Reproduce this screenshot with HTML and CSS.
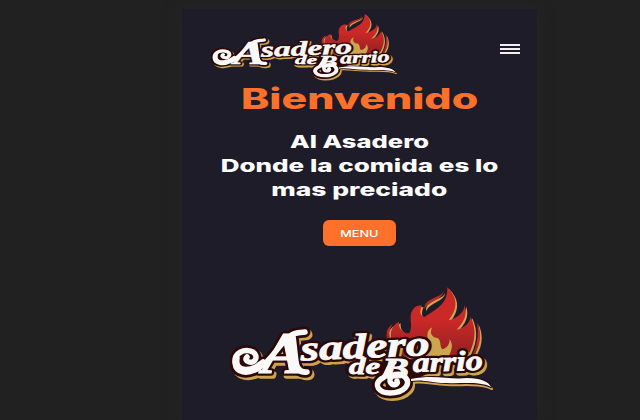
FILE: index.html
```html
<!DOCTYPE html>
<html lang="es">
<head>
<meta charset="utf-8">
<title>Asadero de Barrio</title>
<link rel="stylesheet" href="styles.css">
</head>
<body>
<svg class="defs" width="0" height="0" aria-hidden="true">
  <defs>
    <linearGradient id="fire" x1="0" y1="0" x2="0" y2="1">
      <stop offset=".45" stop-color="#cb2828"/>
      <stop offset="1" stop-color="#8c2020"/>
    </linearGradient>
    <g id="lettering">
      <g class="swash">
        <path d="M62 49C50 55 44 73 29 82C17 89 6 87 5 77C4 67 14 62 23 66C29 70 25 78 19 76C16 75 15 73 17 71"/>
        <path d="M7 72C5 83 14 86 26 81L33 76"/>
        <path d="M63 50L66 76C67 83 70 87 77 86M62 49C66 46 70 47 75 46"/>
        <path d="M164 76C156 82 158 91 151 93C143 99 149 107 160 107C174 107 182 98 175 91C170 86 159 88 160 95C161 101 169 99 167 95"/>
      </g>
      <text class="script" x="32" y="87" font-size="59" textLength="43" lengthAdjust="spacingAndGlyphs">A</text>
      <text class="script" x="71" y="74.500" font-size="35" textLength="129" lengthAdjust="spacingAndGlyphs" transform="rotate(-2.4 71 74.500)">sadero</text>
      <text class="script" x="119" y="87.500" font-size="23" textLength="31" lengthAdjust="spacingAndGlyphs">de</text>
      <text class="script" x="152" y="92" font-size="30" textLength="27" lengthAdjust="spacingAndGlyphs">B</text>
      <text class="script" x="183" y="86" font-size="28" textLength="70" lengthAdjust="spacingAndGlyphs" transform="rotate(-2 183 86)">arrio</text>
    </g>
    <path id="tail" d="M181 93C205 88 219 94 237 92C251 92 259 96 261 101C249 95 231 98 216 97C202 97 193 93 181 95Z"/>
    <g id="flames">
      <path d="M292 22C325 55 323 86 296 121C322 115 346 94 343 74C355 105 338 130 320 149C345 145 360 125 362 110C382 152 375 190 350 236L170 240L124 180C118 150 130 135 147 125C144 148 163 161 178 160C193 133 170 110 192 85C200 75 212 78 216 76C207 95 211 110 224 111C252 90 294 77 292 22Z"/>
      <path d="M281 34C276 61 234 62 224 89C221 73 229 65 247 57C262 50 274 47 281 34Z"/>
      <path d="M380 127C397 160 394 205 361 238C380 201 389 165 380 127Z"/>
      <path d="M128 132C112 143 107 158 111 177L121 179C116 161 118 147 128 132Z"/>
    </g>
    <symbol id="logo" viewBox="0 0 266 116" preserveAspectRatio="none">
      <g transform="translate(120 -6) scale(.3333)">
        <use href="#flames" x="5" y="5" fill="#cda34d"/>
        <use href="#flames" fill="url(#fire)"/>
        <path fill="#cfa44f" d="M247 142C236 161 249 174 263 174C275 183 268 197 277 208C290 205 300 193 299 177C313 199 302 214 294 235L210 235C229 214 216 191 225 175C224 192 237 189 234 177C230 162 233 149 247 142Z"/>
      </g>
      <use href="#lettering" class="gold" x="2" y="2.500"/>
      <use href="#tail" class="gold thin" x="1" y="2"/>
      <use href="#lettering" class="dark"/>
      <use href="#tail" class="dark thin"/>
      <path fill="#2c0808" d="M143 76L211 71L205 84L170 101L150 92Z"/>
      <use href="#lettering" class="white"/>
      <use href="#tail" fill="#fbf9f8"/>
    </symbol>
  </defs>
</svg>
<div class="page">
  <header class="bar">
    <svg class="logo-small" role="img" aria-label="Asadero de Barrio"><use href="#logo"/></svg>
    <div class="burger"><span></span><span></span><span></span></div>
  </header>
  <main class="hero">
    <h1><span class="wide">Bienvenido</span></h1>
    <h2><span class="wide l1">Al Asadero</span><span class="wide l2">Donde la comida es lo</span><span class="wide l3">mas preciado</span></h2>
    <a class="button"><span class="wide">MENU</span></a>
    <svg class="logo-large" role="img" aria-label="Asadero de Barrio"><use href="#logo"/></svg>
  </main>
</div>
</body>
</html>
```
FILE: styles.css
```css
* { box-sizing: border-box; }
body {
  margin: 0;
  height: 420px;
  padding: 9px 0 0 182px;
  overflow: hidden;
  background: #212122;
  font-family: Inter, "Open Sans", sans-serif;
}
.defs { display: block; height: 0; }
.page {
  width: 355px;
  height: 411px;
  background: #1f1c29;
  box-shadow: 0 0 14px #262626;
}
.bar {
  display: flex;
  justify-content: space-between;
  align-items: flex-start;
  height: 78px;
  padding: 4px 17px 0 29px;
}
.logo-small { width: 188px; height: 68px; }
.burger {
  display: grid;
  gap: 2px;
  width: 20px;
  padding-top: 31px;
}
.burger span { height: 2px; background: #f3eef3; }
.hero {
  display: flex;
  flex-direction: column;
  align-items: center;
  text-align: center;
}
h1, h2 { margin: 0; color: #fff; }
h1 {
  height: 24px;
  line-height: 24px;
  font-size: 28px;
  font-weight: 800;
  color: #ff702b;
}
h2 {
  display: flex;
  flex-direction: column;
  align-items: center;
  margin-top: 19px;
  line-height: 24px;
  font-size: 17.500px;
  font-weight: 800;
}
.wide { display: inline-block; white-space: nowrap; }
h1 .wide { transform: scaleX(1.53); }
.l1 { transform: scaleX(1.46); }
.l2 { transform: scaleX(1.485); }
.l3 { transform: scaleX(1.51); }
.button {
  display: flex;
  align-items: center;
  justify-content: center;
  width: 73px;
  height: 26px;
  margin-top: 18px;
  border-radius: 6px;
  background: #ff702b;
  color: #fff;
  font-size: 9.500px;
  font-weight: 500;
}
.button .wide { transform: scaleX(1.34); }
.logo-large { width: 266px; height: 116px; margin: 40px 0 0 7px; }
.script {
  font-family: "Liberation Serif", serif;
  font-weight: bold;
  font-style: italic;
}
.gold { fill: #cda34d; stroke: #cda34d; stroke-width: 5.500; stroke-linejoin: round; --swash: 11; }
.dark { fill: #2c0808; stroke: #2c0808; stroke-width: 5.500; stroke-linejoin: round; --swash: 11; }
.white { fill: #fbf9f8; stroke: #fbf9f8; stroke-width: .8; --swash: 5.500; }
.thin { stroke-width: 2; }
.swash { fill: none; stroke-linecap: round; stroke-width: var(--swash); }
```
